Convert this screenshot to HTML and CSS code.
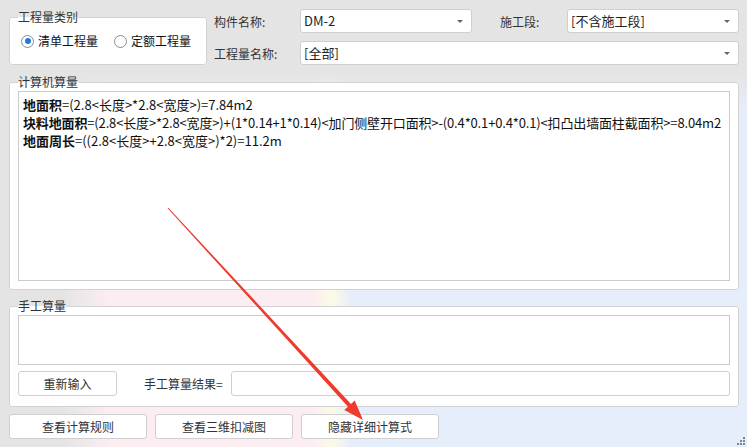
FILE: index.html
```html
<!DOCTYPE html>
<html lang="zh-CN">
<head>
    <meta charset="UTF-8">
    <title>工程量</title>
    <link rel="stylesheet" href="styles.css">
</head>
<body>
    <div class="top-row">
        <fieldset class="group kind-group">
            <legend>工程量类别</legend>
            <div class="radios">
                <label class="radio"><span class="dot checked"></span>清单工程量</label>
                <label class="radio"><span class="dot"></span>定额工程量</label>
            </div>
        </fieldset>

        <div class="fields">
            <div class="field-label">构件名称:</div>
            <div class="select">DM-2<span class="caret"></span></div>
            <div class="field-label second">施工段:</div>
            <div class="select">[不含施工段]<span class="caret"></span></div>
            <div class="field-label">工程量名称:</div>
            <div class="select wide">[全部]<span class="caret"></span></div>
        </div>
    </div>

    <fieldset class="group calc-group">
        <legend>计算机算量</legend>
        <div class="formula-box">
            <div><b>地面积</b>=(2.8&lt;长度&gt;*2.8&lt;宽度&gt;)=7.84m2</div>
            <div class="long"><b>块料地面积</b>=(2.8&lt;长度&gt;*2.8&lt;宽度&gt;)+(1*0.14+1*0.14)&lt;加门侧壁开口面积&gt;-(0.4*0.1+0.4*0.1)&lt;扣凸出墙面柱截面积&gt;=8.04m2</div>
            <div><b>地面周长</b>=((2.8&lt;长度&gt;+2.8&lt;宽度&gt;)*2)=11.2m</div>
        </div>
    </fieldset>

    <fieldset class="group manual-group">
        <legend>手工算量</legend>
        <div class="manual-box"></div>
        <div class="manual-row">
            <button class="btn reset-btn">重新输入</button>
            <span class="result-label">手工算量结果=</span>
            <div class="result-input"></div>
        </div>
    </fieldset>

    <div class="bottom-row">
        <button class="btn action-btn">查看计算规则</button>
        <button class="btn action-btn">查看三维扣减图</button>
        <button class="btn action-btn">隐藏详细计算式</button>
    </div>

    <!-- annotation arrow -->
    <svg class="arrow" width="747" height="447" viewBox="0 0 747 447">
        <polygon fill="#ee3b2e" points="167.6,208.3 168.4,207.7 351,404 354.7,400.6 363,420 344.3,410 348,406.7"/>
    </svg>

    <svg class="grip" width="10" height="10" viewBox="0 0 10 10">
        <rect x="7" y="1" width="2" height="2" fill="#7c8494"/>
        <rect x="4" y="4" width="2" height="2" fill="#7c8494"/>
        <rect x="7" y="4" width="2" height="2" fill="#7c8494"/>
        <rect x="1" y="7" width="2" height="2" fill="#7c8494"/>
        <rect x="4" y="7" width="2" height="2" fill="#7c8494"/>
        <rect x="7" y="7" width="2" height="2" fill="#7c8494"/>
    </svg>
</body>
</html>
```

FILE: styles.css
```css
html, body {
    height: 100%;
}

body {
    margin: 0;
    padding: 9px 8px 0 9px;
    box-sizing: border-box;
    position: relative;
    overflow: hidden;
    font-family: "Noto Sans CJK SC", "Noto Sans", sans-serif;
    font-size: 12px;
    color: #333;
    background:
        linear-gradient(to bottom, #e4e4e4 0, #e4e4e4 72px, rgba(228, 228, 228, 0) 110px),
        linear-gradient(to right, #e4e4e4 0, #e4e4e4 60px, #fcedf3 110px, #fcedf3 312px, #fbfbe4 332px, #e6edfb 352px, #e6edfb 100%);
}

.group {
    margin: 0;
    padding: 0 8px;
    border: 1px solid #d2d2d2;
    border-radius: 3px;
    background: #fff;
    min-width: 0;
}

.group legend {
    padding: 0;
    line-height: 16px;
    color: #333;
}

.top-row {
    display: flex;
    align-items: flex-start;
    gap: 7px;
}

.kind-group {
    width: 198px;
    box-sizing: border-box;
    height: 56px;
}

.radios {
    display: flex;
    gap: 16px;
    padding: 8px 0 0 3px;
}

.radio {
    display: flex;
    align-items: center;
    gap: 4px;
    line-height: 16px;
    color: #111;
}

.dot {
    width: 11px;
    height: 11px;
    border: 1px solid #8c8c8c;
    border-radius: 50%;
    background: #fff;
    position: relative;
}

.dot.checked {
    border-color: #7a8ea8;
}

.dot.checked::after {
    content: "";
    position: absolute;
    left: 2.5px;
    top: 2.5px;
    width: 6px;
    height: 6px;
    border-radius: 50%;
    background: #2479d8;
}

.fields {
    display: grid;
    grid-template-columns: 86px 172px 95px 172px;
    grid-auto-rows: 24px;
    row-gap: 8px;
    align-items: center;
}

.field-label {
    color: #333;
}

.field-label.second {
    padding-left: 28px;
}

.select {
    height: 24px;
    box-sizing: border-box;
    border: 1px solid #cfcfcf;
    border-radius: 3px;
    background: #fff;
    padding-left: 3px;
    line-height: 22px;
    font-size: 13px;
    color: #222;
    position: relative;
}

.select.wide {
    grid-column: 2 / 5;
}

.caret {
    position: absolute;
    right: 8px;
    top: 10px;
    border-left: 3px solid transparent;
    border-right: 3px solid transparent;
    border-top: 3px solid #666;
}

.calc-group {
    margin-top: 9px;
    height: 216px;
    box-sizing: border-box;
    padding-top: 1px;
}

.formula-box {
    height: 190px;
    box-sizing: border-box;
    border: 1px solid #cccccc;
    padding: 4px 4px;
    font-size: 13px;
    line-height: 18px;
    color: #111;
    white-space: nowrap;
}

.formula-box .long {
    letter-spacing: -0.15px;
}

.formula-box b {
    font-weight: bold;
}

.manual-group {
    margin-top: 8px;
    height: 109px;
    box-sizing: border-box;
    padding-top: 1px;
}

.manual-box {
    height: 50px;
    box-sizing: border-box;
    border: 1px solid #cccccc;
}

.manual-row {
    display: flex;
    align-items: center;
    margin-top: 6px;
}

.btn {
    height: 25px;
    box-sizing: border-box;
    border: 1px solid #cfcfcf;
    border-radius: 3px;
    background: #fff;
    font-family: inherit;
    font-size: 12px;
    color: #333;
    padding: 0;
}

.reset-btn {
    width: 99px;
}

.result-label {
    margin-left: 27px;
    width: 87px;
}

.result-input {
    flex: 1;
    height: 25px;
    box-sizing: border-box;
    border: 1px solid #cfcfcf;
    border-radius: 3px;
    background: #fff;
}

.bottom-row {
    display: flex;
    gap: 8px;
    margin-top: 7px;
}

.action-btn {
    width: 138px;
}

.arrow {
    position: absolute;
    left: 0;
    top: 0;
    pointer-events: none;
}

.grip {
    position: absolute;
    right: 1px;
    bottom: 1px;
}
```
